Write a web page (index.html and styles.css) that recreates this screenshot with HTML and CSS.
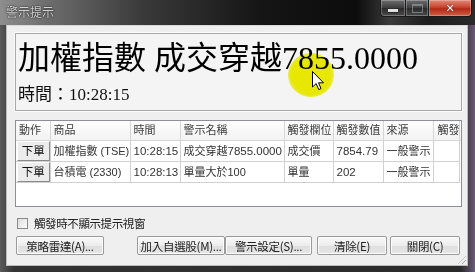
FILE: index.html
```html
<!DOCTYPE html>
<html lang="zh-Hant">
<head>
<meta charset="utf-8">
<link rel="stylesheet" href="styles.css">
</head>
<body>
<div class="window">
  <div class="titlebar">
    <span class="title">警示提示</span>
    <div class="controls">
      <div class="ctl min"><span class="min-bar"></span></div>
      <div class="ctl max"><span class="max-box"></span></div>
      <div class="ctl close"><span class="x">✕</span></div>
    </div>
  </div>
  <div class="frame">
    <div class="client">
      <div class="panel">
        <div class="bigline">加權指數 成交穿越7855.0000</div>
        <div class="timeline">時間：10:28:15</div>
      </div>
      <div class="list">
        <table class="grid">
          <colgroup>
            <col class="c1"><col class="c2"><col class="c3"><col class="c4"><col class="c5"><col class="c6"><col class="c7"><col class="c8"><col>
          </colgroup>
          <thead>
            <tr><th>動作</th><th>商品</th><th>時間</th><th>警示名稱</th><th>觸發欄位</th><th>觸發數值</th><th>來源</th><th class="clip">觸發</th><th class="rest"></th></tr>
          </thead>
          <tbody>
            <tr><td class="act"><span class="cellbtn">下單</span></td><td>加權指數 (TSE)</td><td class="num">10:28:15</td><td>成交穿越<span class="num">7855.0000</span></td><td>成交價</td><td class="num">7854.79</td><td>一般警示</td><td></td><td class="rest"></td></tr>
            <tr><td class="act"><span class="cellbtn">下單</span></td><td>台積電 (2330)</td><td class="num">10:28:13</td><td>單量大於100</td><td>單量</td><td class="num">202</td><td>一般警示</td><td></td><td class="rest"></td></tr>
          </tbody>
        </table>
      </div>
      <label class="check"><span class="box"></span><span>觸發時不顯示提示視窗</span></label>
      <div class="buttons">
        <span class="btn b1">策略雷達(A)...</span>
        <span class="spacer"></span>
        <span class="btn b2">加入自選股(M)...</span>
        <span class="btn b3">警示設定(S)...</span>
        <span class="btn b4">清除(E)</span>
        <span class="btn b5">關閉(C)</span>
      </div>
      <span class="grip"></span>
    </div>
  </div>
  <div class="highlight"></div>
  <svg class="cursor" width="13" height="20" viewBox="0 0 13 20"><path d="M0.5 0.5 L0.5 16 L4.2 12.6 L6.8 18.6 L9 17.6 L6.5 11.8 L11.5 11.8 Z" fill="#fff" stroke="#000" stroke-width="1"/></svg>
</div>
</body>
</html>
```
FILE: styles.css
```css
html, body {
  margin: 0;
  padding: 0;
  width: 475px;
  height: 272px;
  overflow: hidden;
  background: #1a1a1a;
}
.window {
  position: relative;
  width: 475px;
  height: 272px;
  display: flex;
  flex-direction: column;
  background: linear-gradient(90deg, #5a5a5a 0%, #333 3%, #2a2a2a 97%, #6a5a78 100%);
}
.titlebar {
  height: 25px;
  flex: none;
  display: flex;
  align-items: flex-start;
  background: linear-gradient(90deg, #8e8e8e 0%, #6d6d6d 10%, #3a3a3a 30%, #151515 55%, #0c0c0c 75%, #3a3a3a 82%, #1e1e1e 90%, #2a2a2a 100%);
}
.title {
  margin: 4px 0 0 6px;
  font: 12px/15px "Noto Sans CJK TC", sans-serif;
  color: #d4d4d4;
  text-shadow: 0 0 2px #222, 0 0 1px #222;
}
.controls {
  margin-left: auto;
  margin-right: 3px;
  display: flex;
  height: 17px;
}
.ctl {
  height: 16px;
  border: 1px solid #1a1a1a;
  border-top: none;
  display: flex;
  align-items: center;
  justify-content: center;
  box-shadow: inset 0 0 0 1px rgba(255,255,255,0.25);
}
.min { width: 24px; border-radius: 0 0 0 4px; background: linear-gradient(#6e6e6e, #3c3c3c 50%, #2a2a2a 51%, #4a4a4a); }
.max { width: 22px; border-left: none; background: linear-gradient(#6e6e6e, #3c3c3c 50%, #2a2a2a 51%, #4a4a4a); }
.close { width: 42px; border-left: none; border-radius: 0 0 4px 0; background: linear-gradient(#e08a7a, #c8452e 45%, #b02a14 55%, #d0604a); }
.min-bar { width: 10px; height: 3px; background: #e0e0e0; margin-top: 4px; box-shadow: 0 1px 0 #222; }
.max-box { width: 9px; height: 6px; border: 1px solid #9aa; border-top-width: 2px; opacity: 0.6; }
.x { color: #fff; font: bold 11px/11px "DejaVu Sans", sans-serif; text-shadow: 0 0 2px #600; }
.frame {
  flex: 1;
  display: flex;
  padding: 0 7px 6px 6px;
}
.client {
  position: relative;
  flex: 1;
  background: #efefef;
  border: 1px solid #bcbcbc;
  border-top-color: #d8d8d8;
  padding: 7px 5px 0 8px;
  display: flex;
  flex-direction: column;
}
.panel {
  height: 76px;
  border: 1px solid #a8a8a8;
  background: #f4f4f4;
  box-shadow: 0 0 0 1px #fafafa;
  padding: 0 0 0 2px;
  color: #000;
}
.bigline {
  font: 32px/40px "Liberation Serif", "Noto Sans CJK TC", serif;
  height: 40px;
  margin-top: 4px;
  white-space: nowrap;
}
.timeline {
  font: 17px/22px "Liberation Serif", "Noto Sans CJK TC", serif;
  margin-top: 6px;
  color: #111;
}
.list {
  margin-top: 9px;
  height: 85px;
  border: 1px solid #8c8f96;
  background: #fff;
  overflow: hidden;
}
.grid {
  border-collapse: collapse;
  table-layout: fixed;
  width: 445px;
  font: 11px/15px "Liberation Sans", "Noto Sans CJK TC", sans-serif;
  color: #333;
}
.grid .num { font-size: 11.5px; }
.c1 { width: 34px; }
.c2 { width: 80px; }
.c3 { width: 50px; }
.c4 { width: 104px; }
.c5 { width: 49px; }
.c6 { width: 50px; }
.c7 { width: 50px; }
.c8 { width: 26px; }
.grid th {
  height: 19px;
  padding: 0 0 0 3px;
  text-align: left;
  font-weight: normal;
  color: #3a3a3a;
  background: linear-gradient(#fdfdfd, #f2f2f2);
  border-right: 1px solid #d6d6d6;
  border-bottom: 1px solid #d6d6d6;
  white-space: nowrap;
  overflow: hidden;
}
.grid th.clip { padding-left: 4px; }
.grid th.rest, .grid td.rest { border-right: none; padding: 0; }
.grid td.rest { border-bottom: none; }
.grid td {
  height: 20px;
  padding: 0 0 0 3px;
  border-right: 1px solid #d0d0d0;
  border-bottom: 1px solid #d0d0d0;
  white-space: nowrap;
  overflow: hidden;
}
.grid td.act { padding: 0; }
.cellbtn {
  display: flex;
  align-items: center;
  justify-content: center;
  height: 18px;
  margin: 0 0 0 1px;
  background: #ececec;
  border: 1px solid;
  border-color: #fff #8a8a8a #8a8a8a #fff;
  color: #111;
  font-size: 11.5px;
}
.check {
  display: flex;
  align-items: center;
  margin: 9px 0 0 2px;
  font: 11.5px/14px "Noto Sans CJK TC", sans-serif;
  color: #222;
  letter-spacing: -0.4px;
}
.box {
  width: 9px;
  height: 9px;
  border: 1px solid #8a8a8a;
  background: linear-gradient(135deg, #dcdcdc, #fdfdfd);
  margin-right: 6px;
}
.buttons {
  display: flex;
  margin-top: 6px;
  height: 19px;
  padding-right: 2px;
}
.btn {
  display: flex;
  align-items: center;
  justify-content: center;
  box-sizing: border-box;
  height: 19px;
  border: 1px solid #9a9a9a;
  border-radius: 2px;
  background: linear-gradient(#fafafa, #ececec 50%, #dedede 51%, #e6e6e6);
  box-shadow: inset 0 0 0 1px #fcfcfc;
  font: 11.5px/14px "Noto Sans CJK TC", sans-serif;
  color: #222;
  letter-spacing: -0.3px;
}
.b1 { width: 88px; margin-left: 1px; }
.spacer { flex: 1; }
.b2 { width: 88px; }
.b3 { width: 87px; }
.b4 { width: 70px; margin-left: 5px; }
.b5 { width: 70px; margin-left: 3px; }
.grip {
  position: absolute;
  right: 1px;
  bottom: 1px;
  width: 8px;
  height: 8px;
  background: repeating-linear-gradient(135deg, transparent 0 2px, #a0a0a0 2px 3px);
  clip-path: polygon(100% 0, 100% 100%, 0 100%);
}
.highlight {
  position: absolute;
  left: 288px;
  top: 53px;
  width: 46px;
  height: 44px;
  border-radius: 50%;
  background: radial-gradient(circle, #f2f200 60%, rgba(242,242,0,0.6) 75%, rgba(242,242,0,0) 78%);
  mix-blend-mode: multiply;
}
.cursor {
  position: absolute;
  left: 312px;
  top: 71px;
}
```
